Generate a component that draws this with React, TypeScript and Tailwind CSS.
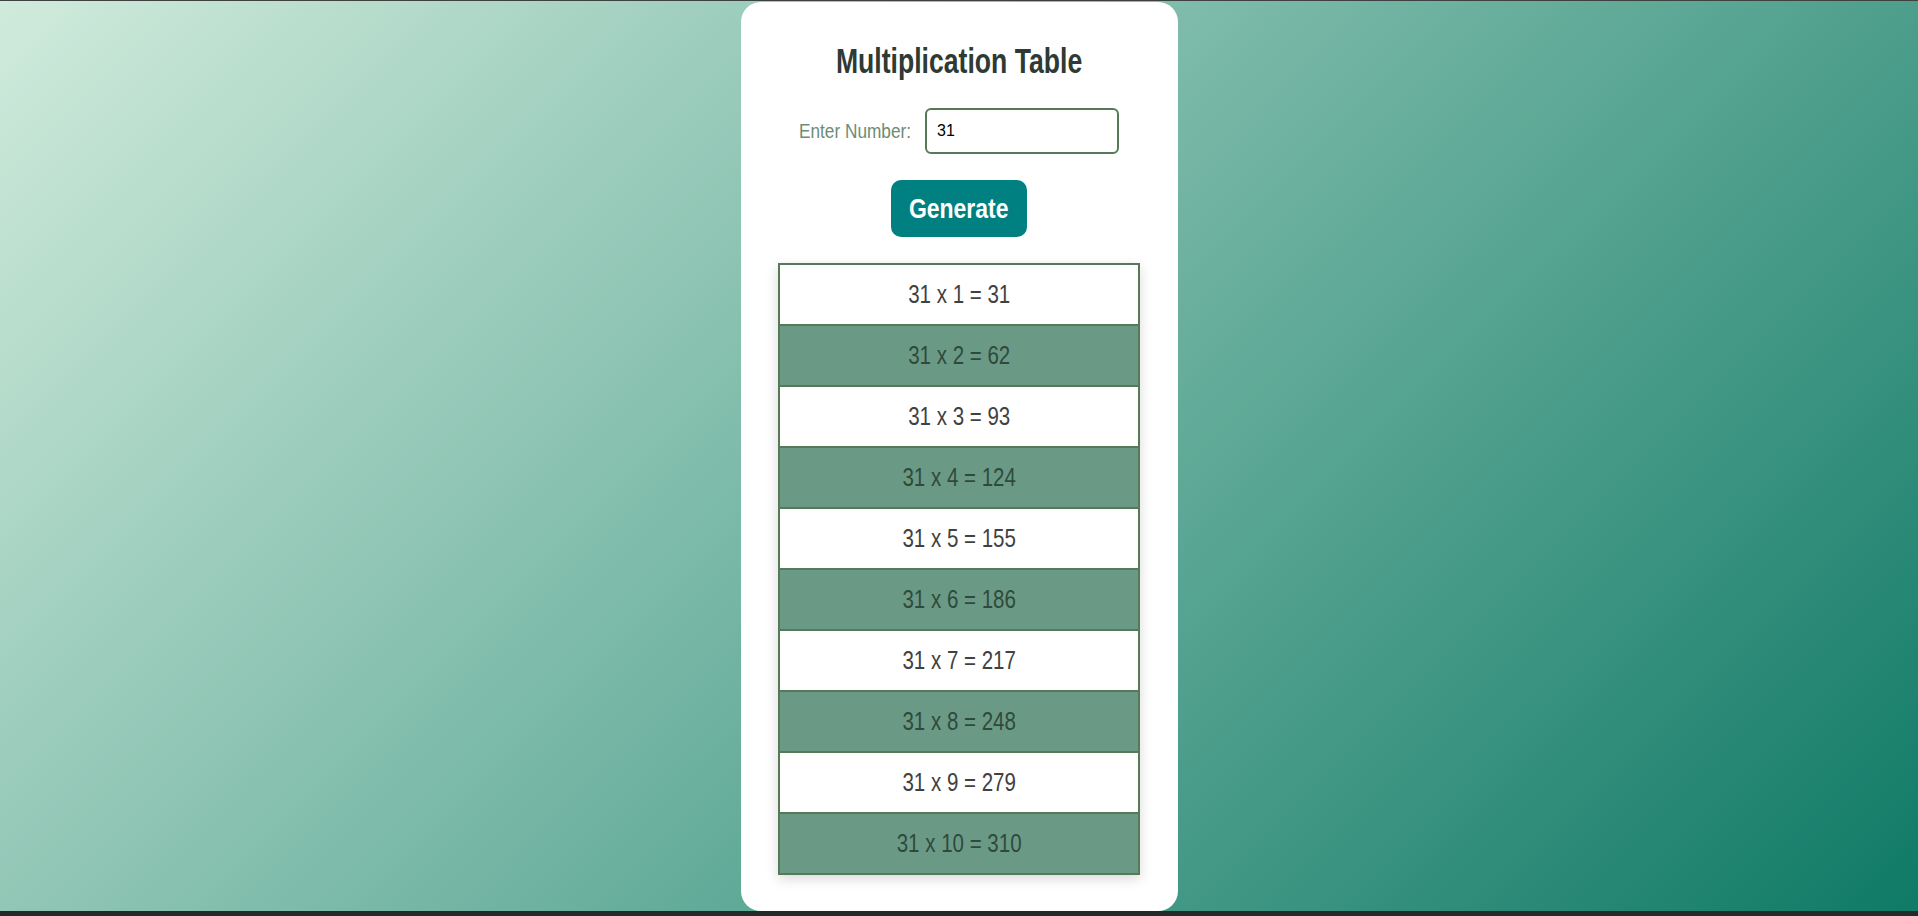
import { useState } from 'react'

const font = { fontFamily: '"Liberation Sans", Arial, sans-serif' }

export default function App() {
  const [value, setValue] = useState('31')
  const [num, setNum] = useState(31)
  const rows = Array.from({ length: 10 }, (_, i) => i + 1)

  return (
    <div className="h-[916px] w-full flex flex-col overflow-hidden" style={font}>
      <div className="h-px bg-[#3d4240]" />
      <main className="flex-1 flex justify-center bg-[linear-gradient(135deg,#d0ebdc,#0f7a66)]">
        <section className="mt-px w-[437px] h-[909px] rounded-[20px] bg-white flex flex-col items-center pt-[41px]">
          {/* condensed look: the narrow face isn't installed, so squeeze the text */}
          <h1 className="h-[35px] text-[35px] leading-none font-bold text-[#2e3a33] whitespace-nowrap inline-block scale-x-[0.76]">
            Multiplication Table
          </h1>
          <div className="mt-[30px] flex items-center gap-[13px]">
            <div className="w-[113px] whitespace-nowrap">
              <span className="inline-block origin-left scale-x-[0.82] text-[21px] text-[#6e8b74]">Enter Number:</span>
            </div>
            <input
              value={value}
              onChange={(e) => setValue(e.target.value)}
              className="w-[194px] h-[46px] rounded-md border-2 border-[#567a57] px-[10px] text-[16px] text-black outline-none"
            />
          </div>
          <button
            onClick={() => setNum(Number(value) || 0)}
            className="mt-[26px] w-[136px] h-[57px] rounded-[10px] bg-[#008080] text-white text-[28px] font-bold whitespace-nowrap"
          >
            <span className="inline-block scale-x-[0.82]">Generate</span>
          </button>
          <div className="mt-[26px] w-[362px] flex flex-col gap-[2px] bg-[#567a57] border-2 border-[#567a57] shadow-[0_4px_12px_rgba(0,0,0,0.15)]">
            {rows.map((i) => (
              <div
                key={i}
                className={
                  'h-[59px] flex items-center justify-center text-[25px] whitespace-nowrap ' +
                  (i % 2 === 0 ? 'bg-[#6a9a86] text-[#2f4a3c]' : 'bg-white text-[#404141]')
                }
              >
                <span className="inline-block scale-x-[0.82]">
                  {num} x {i} = {num * i}
                </span>
              </div>
            ))}
          </div>
        </section>
      </main>
      <div className="h-[5px] bg-[#242a2a]" />
    </div>
  )
}
